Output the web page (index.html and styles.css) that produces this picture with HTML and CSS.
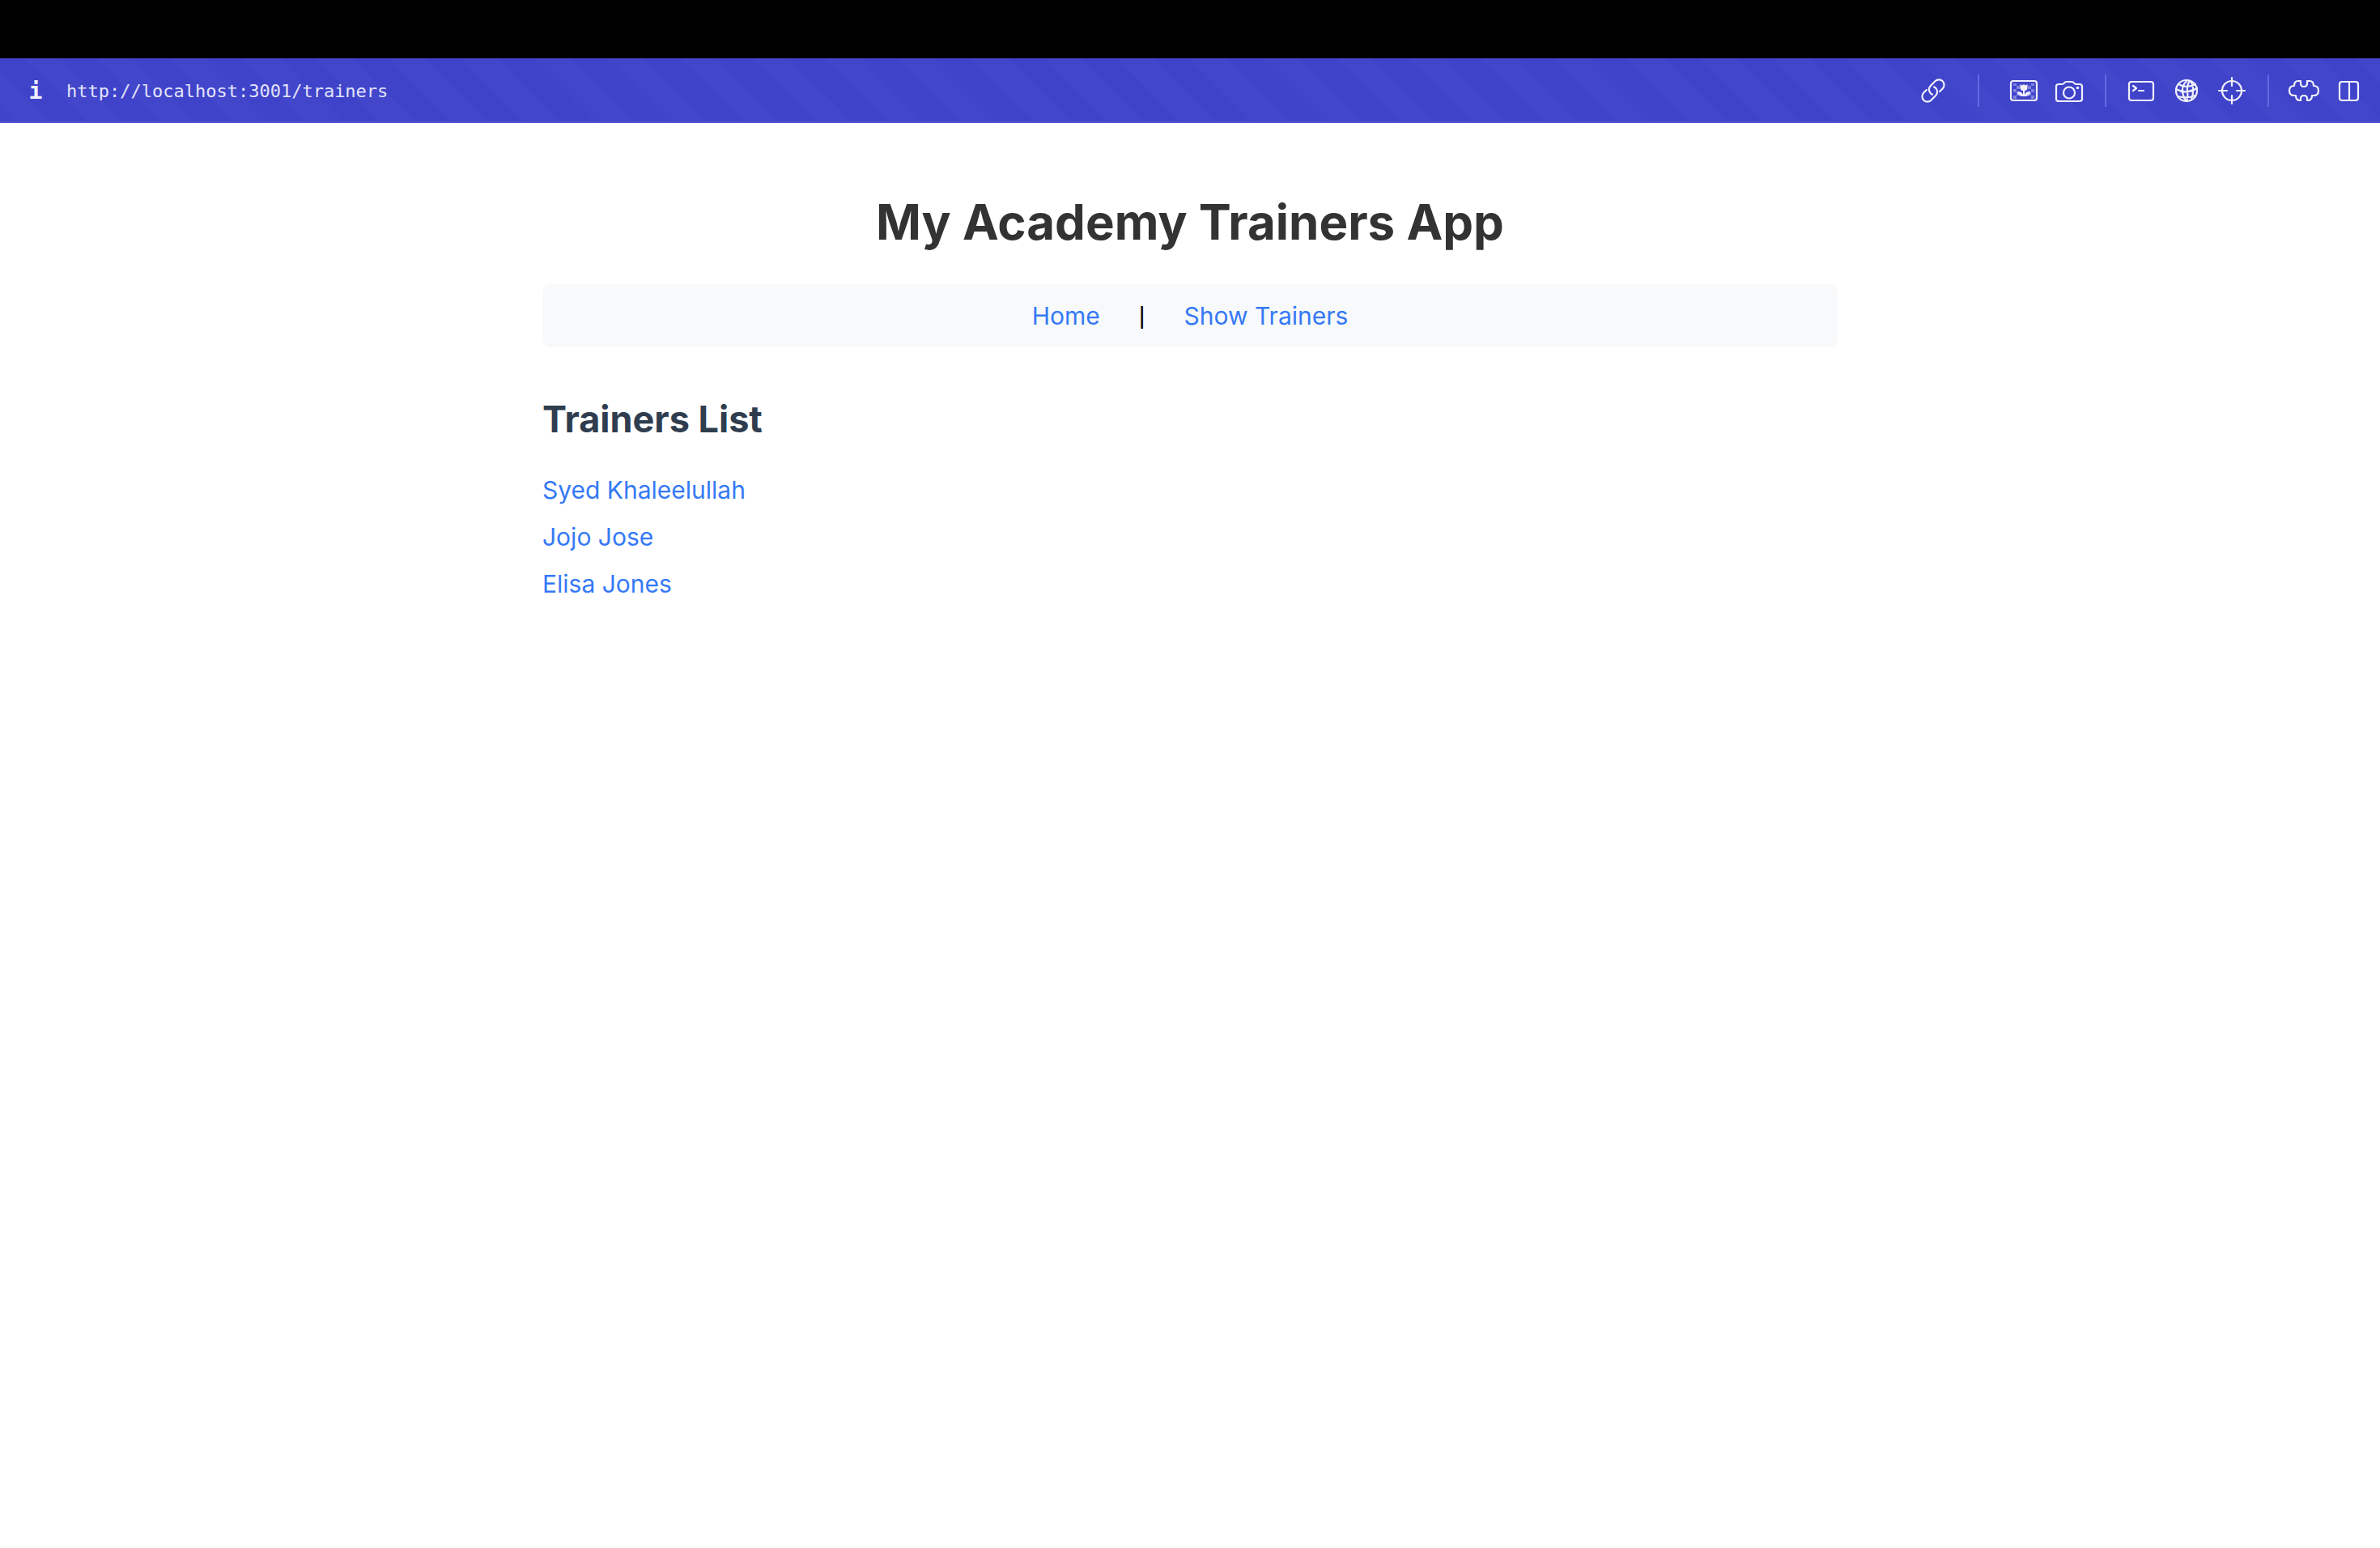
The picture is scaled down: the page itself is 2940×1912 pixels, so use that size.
FILE: index.html
```html
<!DOCTYPE html>
<html lang="en">
<head>
<meta charset="utf-8">
<title>My Academy Trainers App</title>
<link rel="stylesheet" href="styles.css">
</head>
<body>
<div class="titlebar"></div>
<header class="toolbar">
  <button class="info" type="button" aria-label="Site information">i</button>
  <input class="address" type="text" aria-label="Address" value="http://localhost:3001/trainers">
  <div class="tools wide">
    <button class="tool" type="button" aria-label="Copy link">
      <svg viewBox="0 0 40 40"><g transform="rotate(-45 20 20)"><path d="M15 13.500H10a6.500 6.500 0 0 0 0 13h8a6.500 6.500 0 0 0 6.500-6.500q0-1.500-.5-2.500M25 26.500h5a6.500 6.500 0 0 0 0-13h-8a6.500 6.500 0 0 0-6.500 6.500q0 1.500.5 2.500"/></g></svg>
    </button>
  </div>
  <div class="tools wide-start">
    <button class="tool" type="button" aria-label="Capture element">
      <svg viewBox="0 0 40 40"><rect x="4" y="8" width="32" height="24" rx="3"/><path class="faint" d="M7 11h4v3H7zM11 14h4v4h-4zM7 18h4v4H7zM11 22h3v4h-3zM7 26h4v4H7zM29 11h4v3h-4zM25 14h4v4h-4zM29 18h4v4h-4zM26 22h3v4h-3zM29 26h4v4h-4z"/><path class="solid" d="M15.500 12l2.500 1.500L20 12l2 1.500 2.500-1.500v4q0 4-3.500 4v5q1-4 7-4 0 6-8 6t-8-6q6 0 7 4v-5q-3.500 0-3.500-4z"/></svg>
    </button>
    <button class="tool" type="button" aria-label="Capture page">
      <svg viewBox="0 0 40 40"><path d="M7 12h4q2 0 3-1.500T17 9h6q2 0 3 1.500T29 12h4q3 0 3 3v15q0 3-3 3H7q-3 0-3-3V15q0-3 3-3z"/><circle cx="20" cy="22.500" r="7"/><circle class="solid" cx="30.500" cy="16.500" r="1.800"/></svg>
    </button>
  </div>
  <div class="tools">
    <button class="tool" type="button" aria-label="Console">
      <svg viewBox="0 0 40 40"><rect x="5" y="9" width="30" height="23" rx="3"/><path d="M10 14l4 3-4 3M17 20h6"/></svg>
    </button>
    <button class="tool" type="button" aria-label="Network">
      <svg viewBox="0 0 40 40"><circle cx="20" cy="20" r="13"/><path d="M21 7.500q-7 5.500-6 13.500t5 12M24 8q-4 5-3 13t-1 12M25 8q6 8 1 23M10 12q10 6 21 0M7 18q12 7 26-1M9 27q11 3 22-1"/><circle class="solid" cx="15" cy="21" r="2"/><circle class="solid" cx="27" cy="20" r="2"/></svg>
    </button>
    <button class="tool" type="button" aria-label="Inspect">
      <svg viewBox="0 0 40 40"><circle cx="20" cy="20" r="12"/><path d="M20 4v10M20 26v10M4 20h10M26 20h10"/></svg>
    </button>
  </div>
  <div class="tools">
    <button class="tool" type="button" aria-label="Extensions">
      <svg viewBox="0 0 40 40"><path d="M8 14q0-6 5-6h3v3q0 4 4 4t4-4V8h3q5 0 5 6 6 0 6 6t-6 6h-2q0 6-5 6h-1v-2q0-4-4-4t-4 4v2h-1q-5 0-5-6H8q-6 0-6-6t6-6z"/></svg>
    </button>
    <button class="tool" type="button" aria-label="Split view">
      <svg viewBox="0 0 40 40"><rect x="8" y="9" width="23" height="23" rx="3"/><path d="M20 9v23"/></svg>
    </button>
  </div>
</header>
<main class="page">
  <h1>My Academy Trainers App</h1>
  <nav class="menu">
    <a href="#home">Home</a><span class="bar">|</span><a href="#trainers">Show Trainers</a>
  </nav>
  <h2>Trainers List</h2>
  <ul class="trainers">
    <li><a href="#1">Syed Khaleelullah</a></li>
    <li><a href="#2">Jojo Jose</a></li>
    <li><a href="#3">Elisa Jones</a></li>
  </ul>
</main>
</body>
</html>
```
FILE: styles.css
```css
* { box-sizing: border-box; }
body {
  margin: 0;
  background: #fff;
  color: #000;
  font: 30px/38px Inter, "Liberation Sans", sans-serif;
}
.titlebar { height: 72px; background: #000; }
.toolbar {
  display: flex;
  align-items: center;
  height: 80px;
  padding: 0 18px 0 30px;
  box-shadow: inset 0 -2px #5559cf;
  background: linear-gradient(45deg, #4246cb 25%, #3f43c9 25% 50%, #4246cb 50% 75%, #3f43c9 75%) 30px 0 / 90px 90px;
}
.info, .address, .tool {
  border: 0;
  padding: 0;
  background: none;
  font-family: "DejaVu Sans Mono", monospace;
}
.info {
  width: 28px;
  margin-right: 24px;
  color: #efeffc;
  font-size: 28px;
  font-weight: 700;
}
.address {
  flex: 1;
  height: 40px;
  color: #e2e3f9;
  font-size: 22px;
}
.tools {
  display: flex;
  align-items: center;
  gap: 16px;
  height: 40px;
  padding: 0 24px 0 23px;
}
.tools + .tools { border-left: 2px solid #6367e2; }
.tools.wide { padding-right: 35px; }
.tools.wide-start { padding-left: 35px; }
.tools:last-child { padding-right: 0; }
.tool { width: 40px; height: 40px; }
.tool svg {
  display: block;
  width: 40px;
  height: 40px;
  fill: none;
  stroke: #f0f0fd;
  stroke-width: 2.2;
  stroke-linecap: round;
  stroke-linejoin: round;
}
.tool .solid { fill: #f0f0fd; stroke: none; }
.tool .faint { fill: #8084df; stroke: none; }
.page {
  max-width: 1600px;
  margin: 0 auto;
  padding-top: 84px;
}
h1 {
  margin: 0 0 38px;
  color: #333;
  font-size: 60px;
  line-height: 77px;
  text-align: center;
}
.menu {
  display: flex;
  justify-content: center;
  gap: 48px;
  padding: 20px;
  border-radius: 10px;
  background: #f8f9fb;
}
.bar { font-family: "Liberation Sans", sans-serif; }
h2 {
  margin: 60px 0 39px;
  color: #2f3d4f;
  font-size: 45px;
  line-height: 58px;
}
a { color: #3579f6; text-decoration: none; }
.trainers {
  display: grid;
  gap: 20px;
  margin: 0;
  padding: 0;
  list-style: none;
}
```
